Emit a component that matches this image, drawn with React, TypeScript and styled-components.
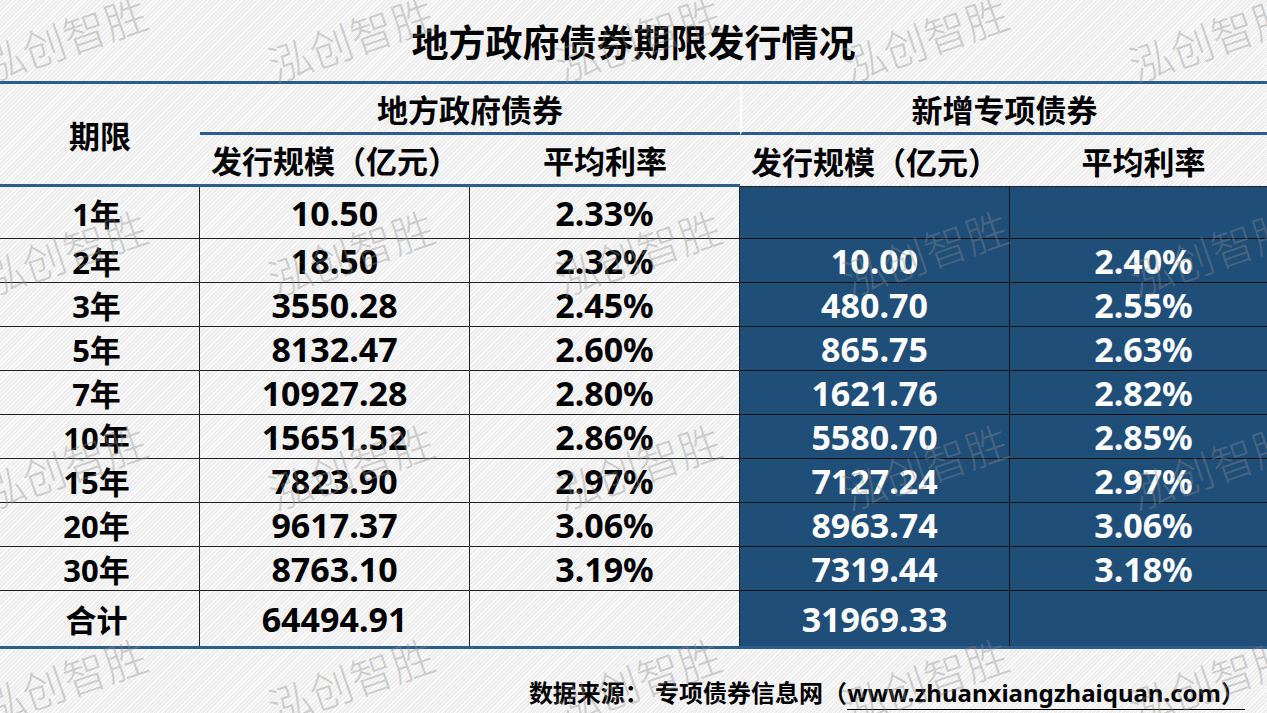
import React from "react";
import styled, { createGlobalStyle } from "styled-components";

const BLUE = "#1f4e79";
const RULE = "#2d5d8b";
const GRID = "#222222";

type Row = [string, string, string, string, string];

const rows: Row[] = [
    ["1年", "10.50", "2.33%", "", ""],
    ["2年", "18.50", "2.32%", "10.00", "2.40%"],
    ["3年", "3550.28", "2.45%", "480.70", "2.55%"],
    ["5年", "8132.47", "2.60%", "865.75", "2.63%"],
    ["7年", "10927.28", "2.80%", "1621.76", "2.82%"],
    ["10年", "15651.52", "2.86%", "5580.70", "2.85%"],
    ["15年", "7823.90", "2.97%", "7127.24", "2.97%"],
    ["20年", "9617.37", "3.06%", "8963.74", "3.06%"],
    ["30年", "8763.10", "3.19%", "7319.44", "3.18%"],
    ["合计", "64494.91", "", "31969.33", ""],
];

const GlobalStyle = createGlobalStyle`
    html, body {
        margin: 0;
        padding: 0;
    }
    body {
        width: 1267px;
        height: 713px;
        overflow: hidden;
        font-family: "Noto Sans", "Noto Sans CJK SC", sans-serif;
        background-color: #f2f2f2;
        background-image: repeating-linear-gradient(135deg, #fbfbfb 0 1px, #eeeeee 1px 3px);
    }
`;

export default function App() {
    return (
        <>
            <GlobalStyle />
            <Page>
                <Title>地方政府债券期限发行情况</Title>
                <Table>
                    <TermHead>期限</TermHead>
                    <GroupCell>地方政府债券</GroupCell>
                    <GroupCell $split>新增专项债券</GroupCell>
                    <SubCell $rule="blue">发行规模（亿元）</SubCell>
                    <SubCell $rule="blue">平均利率</SubCell>
                    <SubCell $rule="dark">发行规模（亿元）</SubCell>
                    <SubCell $rule="dark" $nudge>平均利率</SubCell>
                    {rows.map((row, i) => {
                        const last = i === rows.length - 1;
                        return (
                            <React.Fragment key={row[0]}>
                                <LabelCell $last={last} $divider>{row[0]}</LabelCell>
                                <ValueCell $last={last} $divider>{row[1]}</ValueCell>
                                <ValueCell $last={last} $divider>{row[2]}</ValueCell>
                                <ValueCell $last={last} $divider $blue>{row[3]}</ValueCell>
                                <ValueCell $last={last} $blue $nudge>{row[4]}</ValueCell>
                            </React.Fragment>
                        );
                    })}
                </Table>
                <Footer>
                    <span>数据来源：&nbsp;专项债券信息网（</span>
                    <Link>www.zhuanxiangzhaiquan.com）</Link>
                </Footer>
                <Watermarks aria-hidden>
                    {Array.from({ length: 20 }).map((_, i) => (
                        <Mark key={i}>泓创智胜</Mark>
                    ))}
                </Watermarks>
            </Page>
        </>
    );
}

const Page = styled.div`
    position: relative;
    width: 1267px;
    height: 713px;
    display: flex;
    flex-direction: column;
    overflow: hidden;
`;

const Title = styled.h1`
    margin: 0;
    height: 81px;
    display: flex;
    align-items: center;
    justify-content: center;
    font-size: 37px;
    font-weight: 700;
    color: #000;
`;

const Table = styled.div`
    display: grid;
    grid-template-columns: 200px 270px 270px 270px 257px;
    grid-template-rows: 51px 52px 52px repeat(8, 44px) 55px;
    border-top: 3px solid ${RULE};
    border-bottom: 3px solid ${RULE};
    color: #000;
    font-weight: 700;
`;

const BaseCell = styled.div`
    box-sizing: border-box;
    display: flex;
    align-items: center;
    justify-content: center;
    white-space: nowrap;
`;

const TermHead = styled(BaseCell)`
    grid-row: span 2;
    font-size: 31px;
    border-bottom: 3px solid ${RULE};
`;

const GroupCell = styled(BaseCell)<{ $split?: boolean }>`
    grid-column: span 2;
    font-size: 31px;
    border-bottom: 3px solid ${RULE};
    border-left: ${(p) => (p.$split ? "2px solid #ffffff" : "none")};
`;

const SubCell = styled(BaseCell)<{ $rule: "blue" | "dark"; $nudge?: boolean }>`
    font-size: 31px;
    padding-left: ${(p) => (p.$nudge ? "10px" : "0")};
    border-bottom: ${(p) => (p.$rule === "blue" ? `3px solid ${RULE}` : `1px solid ${GRID}`)};
`;

const LabelCell = styled(BaseCell)<{ $last?: boolean; $divider?: boolean }>`
    font-size: 31px;
    padding-right: 6px;
    border-bottom: ${(p) => (p.$last ? "none" : `1.5px solid ${GRID}`)};
    border-right: ${(p) => (p.$divider ? `1.5px solid ${GRID}` : "none")};
`;

const ValueCell = styled(BaseCell)<{ $last?: boolean; $divider?: boolean; $blue?: boolean; $nudge?: boolean }>`
    font-size: 34px;
    padding-left: ${(p) => (p.$nudge ? "10px" : "0")};
    color: ${(p) => (p.$blue ? "#ffffff" : "#000000")};
    background: ${(p) => (p.$blue ? BLUE : "transparent")};
    border-bottom: ${(p) => (p.$last ? "none" : `1.5px solid ${p.$blue ? "#111111" : GRID}`)};
    border-right: ${(p) => (p.$divider ? `1.5px solid ${p.$blue ? "#111111" : GRID}` : "none")};
`;

const Footer = styled.footer`
    flex: 1;
    display: flex;
    justify-content: flex-end;
    align-items: flex-start;
    padding: 25px 22px 0 0;
    font-size: 24px;
    font-weight: 700;
    color: #000;
    white-space: nowrap;
`;

const Link = styled.span`
    border-bottom: 1.5px solid #000;
`;

const Watermarks = styled.div`
    position: absolute;
    left: -80px;
    top: -70px;
    display: grid;
    grid-template-columns: repeat(5, 287px);
    grid-template-rows: repeat(4, 214px);
    pointer-events: none;
    z-index: 5;
`;

const Mark = styled.span`
    display: flex;
    align-items: center;
    justify-content: center;
    font-family: "Noto Sans CJK SC", sans-serif;
    font-size: 43px;
    font-weight: 300;
    color: rgba(140, 140, 140, 0.4);
    transform: rotate(-19deg);
    white-space: nowrap;
`;
